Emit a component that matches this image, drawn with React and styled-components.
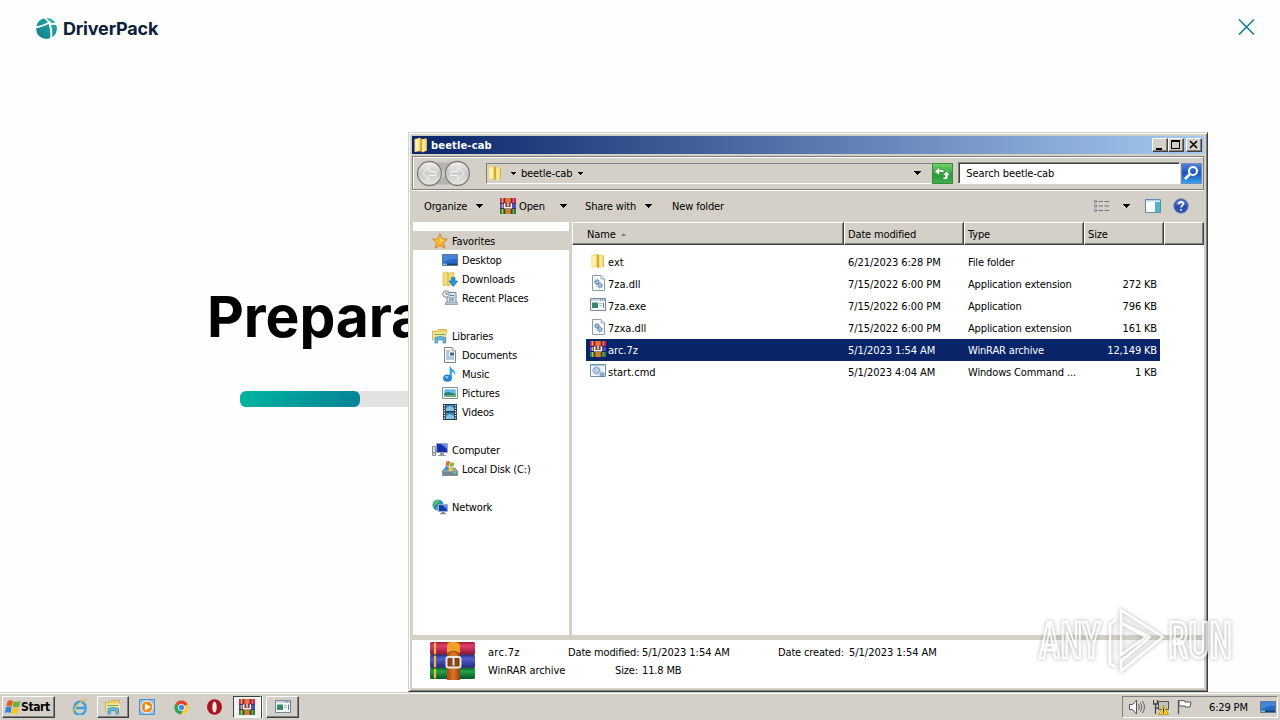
import React from 'react'
import styled, { createGlobalStyle } from 'styled-components'

const GlobalStyle = createGlobalStyle`
  * {
    box-sizing: border-box;
  }
  body {
    margin: 0;
    overflow: hidden;
    background: #fff;
  }
`

const Desktop = styled.div`
  position: relative;
  width: 1280px;
  height: 720px;
  display: flex;
  flex-direction: column;
  overflow: hidden;
  background: #fefefe;
  color: #000;
  font-family: "DejaVu Sans Condensed", "DejaVu Sans", Tahoma, sans-serif;
  font-stretch: condensed;
  font-size: 11px;
  line-height: 14px;
  white-space: nowrap;
`

/* ---------- DriverPack ---------- */

const Installer = styled.main`
  flex: 1;
  font-family: Inter, sans-serif;
  font-stretch: normal;
`

const InstallerHeader = styled.header`
  display: flex;
  justify-content: space-between;
  align-items: flex-start;
  padding: 17px 25px 0 35px;
  height: 283px;
`

const Brand = styled.div`
  display: flex;
  align-items: center;
  gap: 5px;
  height: 23px;
  color: #0b2138;
  font-size: 18px;
  font-weight: 700;
  letter-spacing: -0.18px;
`

const CloseIcon = styled.svg`
  width: 17px;
  height: 17px;
  margin-top: 1px;
`

const Heading = styled.h1`
  margin: 0;
  padding-left: 207px;
  height: 108px;
  font-size: 57px;
  line-height: 68px;
  font-weight: 700;
  letter-spacing: -0.1px;
`

const Progress = styled.div`
  width: 800px;
  height: 16px;
  margin-left: 240px;
  border-radius: 6px;
  background: #e2e2e2;
`

const ProgressBar = styled.div`
  height: 100%;
  border-radius: 6px;
  background: linear-gradient(120deg, #02b3a1 5%, #068496 95%);
`

/* ---------- Explorer ---------- */

const Window = styled.section`
  position: absolute;
  left: 408px;
  top: 132px;
  width: 800px;
  height: 560px;
  display: flex;
  flex-direction: column;
  padding: 2px 1px 3px 2px;
  background: #d4d0c8;
  border: 1px solid;
  border-color: #d4d0c8 #404040 #404040 #d4d0c8;
  box-shadow: inset 1px 1px #fff, inset -1px -1px #808080;
`

const TitleBar = styled.div`
  display: flex;
  align-items: center;
  flex: none;
  width: 792px;
  height: 18px;
  margin: 1px 0 2px 1px;
  padding: 0 2px 0 1px;
  background: linear-gradient(90deg, #0a246a, #a6caf0);
  color: #fff;
  font-weight: 700;
`

const Title = styled.span`
  flex: 1;
  margin-left: 2px;
  padding-top: 1px;
  letter-spacing: 0.17px;
`

const CaptionButton = styled.div`
  width: 16px;
  height: 14px;
  margin-left: ${({ $gap }) => $gap || 0}px;
  background: #d4d0c8;
  border: 1px solid;
  border-color: #fff #404040 #404040 #fff;
  box-shadow: inset -1px -1px #808080;
  svg {
    display: block;
  }
`

const NavBar = styled.div`
  display: flex;
  align-items: center;
  flex: none;
  width: 792px;
  height: 34px;
  margin-left: 1px;
  padding: 0 1px 0 4px;
  border: 1px solid #808080;
  box-shadow: inset 1px 1px #fff, 0 1px #fff;
`

const AddressBar = styled.div`
  display: flex;
  align-items: center;
  width: 447px;
  height: 21px;
  margin-left: 15px;
  padding-right: 10px;
  border: 1px solid;
  border-color: #808080 #d4d0c8 #fff #808080;
`

const Push = styled.span`
  flex: 1;
`

const SquareButton = styled.div`
  width: 21px;
  height: 21px;
  border: 1px solid #808080;
  border-color: ${({ $edge }) => $edge};
  background: ${({ $bg }) => $bg};
  svg {
    display: block;
  }
`

const SearchBox = styled.div`
  display: flex;
  align-items: center;
  width: 222px;
  height: 22px;
  margin: 0 1px 0 5px;
  padding-left: 7px;
  background: #fff;
  border: 1px solid;
  border-color: #808080 #fff #fff #808080;
  box-shadow: inset 1px 1px #404040;
`

const CommandBar = styled.div`
  display: flex;
  align-items: center;
  flex: none;
  height: 32px;
  padding: 0 17px 0 13px;
`

const Label = styled.span`
  flex: none;
  width: ${({ $w }) => ($w ? `${$w}px` : 'auto')};
  margin-left: ${({ $ml }) => $ml || 0}px;
  padding-top: 2px;
  letter-spacing: ${({ $ls }) => $ls ?? -0.15}px;
  text-align: ${({ $right }) => ($right ? 'right' : 'left')};
`

const Spacer = styled.span`
  flex: none;
  width: ${({ $w }) => $w}px;
`

const ArrowSvg = styled.svg`
  flex: none;
  width: ${({ $small }) => ($small ? 5 : 7)}px;
  height: ${({ $small }) => ($small ? 3 : 4)}px;
  margin-left: ${({ $ml }) => $ml || 0}px;
`

const Body = styled.div`
  display: flex;
  flex: 1;
  width: 792px;
  margin-left: 1px;
  border-bottom: 5px solid #d4d0c8;
  background: #fff;
`

const Sidebar = styled.nav`
  width: 160px;
  padding-top: 9px;
  border-right: 3px solid #d4d0c8;
  border-left: 1px solid #d4d0c8;
`

const SideRow = styled.div`
  display: flex;
  align-items: center;
  gap: 4px;
  height: 19px;
  margin-bottom: ${({ $last }) => ($last ? 19 : 0)}px;
  padding-left: ${({ $child }) => ($child ? 29 : 19)}px;
  background: ${({ $active }) => ($active ? '#d4d0c8' : 'transparent')};
`

const FileList = styled.div`
  flex: 1;
`

const Columns = styled.div`
  display: flex;
  height: 23px;
  margin-bottom: 6px;
`

const ColumnHead = styled.div`
  display: flex;
  align-items: center;
  width: ${({ $w }) => $w}px;
  padding-left: ${({ $pad }) => $pad || 3}px;
  padding-top: 1px;
  background: #d4d0c8;
  border: 1px solid;
  border-color: #fff #404040 #404040 #fff;
  box-shadow: inset -1px -1px #808080;
`

const SortMark = styled.svg`
  width: 5px;
  height: 3px;
  margin-left: 5px;
`

const FileRow = styled.div`
  display: flex;
  align-items: center;
  width: 574px;
  height: 22px;
  margin-left: 14px;
  padding: 0 4px;
  background: ${({ $selected }) => ($selected ? '#0a246a' : 'transparent')};
  color: ${({ $selected }) => ($selected ? '#fff' : '#000')};
`

const FileIcon = styled.span`
  flex: none;
  width: 18px;
  height: 18px;
`

const Details = styled.footer`
  display: flex;
  flex: none;
  width: 792px;
  height: 48px;
  margin-left: 1px;
  padding: 2px 0 0 18px;
  background: #fff;
`

const DetailColumn = styled.div`
  width: ${({ $w }) => $w}px;
  padding-top: ${({ $top }) => $top ?? 1}px;
`

const DetailLine = styled.div`
  display: flex;
  align-items: center;
  gap: 4px;
  height: 18px;
`

/* ---------- Taskbar ---------- */

const Taskbar = styled.footer`
  display: flex;
  align-items: center;
  height: 28px;
  padding: 2px 2px 0;
  background: #d4d0c8;
  box-shadow: inset 0 1px #d4d0c8, inset 0 2px #fff;
`

const StartButton = styled.div`
  display: flex;
  align-items: center;
  width: 53px;
  height: 22px;
  padding: 0 0 0 1px;
  font-size: 12px;
  font-weight: 700;
  letter-spacing: -0.4px;
  border: 1px solid;
  border-color: #fff #404040 #404040 #fff;
  box-shadow: inset -1px -1px #808080;
`

const TaskButton = styled.div`
  display: flex;
  align-items: center;
  justify-content: center;
  width: ${({ $w }) => $w || 32}px;
  height: 22px;
  margin-left: ${({ $ml }) => $ml || 0}px;
  border: 1px solid;
  border-color: ${({ $look }) =>
    $look === 'up' ? '#fff #404040 #404040 #fff' : $look === 'down' ? '#404040 #fff #fff #404040' : 'transparent'};
  background: ${({ $look }) => ($look === 'down' ? '#f3f1ee' : 'transparent')};
  box-shadow: ${({ $look }) => ($look === 'up' ? 'inset -1px -1px #808080' : 'none')};
`

const Edge = styled.div`
  width: 2px;
  height: 22px;
  border-left: 1px solid #404040;
  border-right: 1px solid #fff;
`

const Tray = styled.div`
  display: flex;
  align-items: center;
  width: 156px;
  height: 22px;
  padding-left: 6px;
  gap: 8px;
  border: 1px solid;
  border-color: #808080 #fff #fff #808080;
`

const Watermark = styled.svg`
  position: absolute;
  left: 1030px;
  top: 600px;
  overflow: visible;
  filter: drop-shadow(0 0 2px rgba(0, 0, 0, 0.42));
  opacity: 0.75;
`

const IconSvg = styled.svg`
  display: block;
  flex: none;
`

const Icon = ({ size = 16, box = 16, children }) => (
  <IconSvg width={size} height={size} viewBox={`0 0 ${box} ${box}`}>
    {children}
  </IconSvg>
)

const Arrow = ({ ml, small }) => (
  <ArrowSvg $ml={ml} $small={small} viewBox={small ? '0 0 5 3' : '0 0 7 4'} shapeRendering="crispEdges">
    <path d={small ? 'M0 0h5v1H4v1H3v1H2V2H1V1H0z' : 'M0 0h7v1H6v1H5v1H4v1H3V3H2V2H1V1H0z'} />
  </ArrowSvg>
)

const Folder = () => (
  <Icon>
    <path d="M1.500 2L7 .8v13.400L1.500 15z" fill="#f4dc7c" />
    <path d="M2.500 3l3-.7v11l-3 .6z" fill="#fcf3b6" />
    <path d="M7 .8L9 2v13l-2-.8z" fill="#d3aa3a" />
    <path d="M9 2.200l4.500-.9v12.500L9 15.500z" fill="#f3da74" />
    <path d="M9.700 3l1.800-.4v11.500l-1.800.6z" fill="#fbeea6" />
    <path d="M13 2l1 .8v10.800l-1 .4z" fill="#dcb94e" />
  </Icon>
)

const Books = () => (
  <Icon>
    <path d="M0 0h16v5H0z" fill="#c22a5c" />
    <path d="M0 5.500h16V10H0z" fill="#4b4fc8" />
    <path d="M0 10.500h16V16H0z" fill="#16883d" />
    <path d="M0 5h16v.8H0zM0 10h16v.8H0z" fill="#231337" />
    <path d="M1.800 0h1.400v4.800H1.800zM1.800 6h1.400v4H1.800zM1.800 11h1.400v4.800H1.800z" fill="#f0b343" />
    <path d="M4 0h1v16H4zM11 0h1v16h-1z" fill="#2a1840" opacity=".45" />
    <path d="M12.800 0H14v4.800h-1.200zM12.800 11H14v4.800h-1.200z" fill="#dd724c" />
    <path d="M5.500 0h5v4.500h-5zM5.500 11h5v5h-5z" fill="#e4782a" />
    <path d="M4.700 5.200v4.600h6.600V5.200" fill="#8a3d28" stroke="#f6f2ec" strokeWidth="1.400" />
    <path d="M8 4.500v4" stroke="#fff" strokeWidth="1.200" />
  </Icon>
)

const Star = () => (
  <Icon>
    <path d="M8 .8l2.200 4.900 5.200.5-3.900 3.600 1.100 5.300L8 12.400l-4.600 2.700 1.100-5.300L.6 6.200l5.200-.5z" fill="#fcb72a" stroke="#d5812c" strokeWidth=".9" />
    <path d="M8 3l1.300 3.500 3.400.4L8 9z" fill="#ffe17b" />
  </Icon>
)

const Monitor = () => (
  <Icon>
    <path d="M.5 2.500h15v11H.5z" fill="#2768c5" stroke="#5d7794" />
    <path d="M1 3h14v4Q8 6 1 11z" fill="#4384d6" />
    <path d="M1 11.500h14V13H1z" fill="#183f72" />
    <path d="M1 11.500h4V13H1z" fill="#7ac6e2" />
  </Icon>
)

const Downloads = () => (
  <Icon>
    <path d="M1 1.500L6 1v13l-5 .7zM6 2l6-.5V13l-6 2z" fill="#f3d977" stroke="#d4b14d" strokeWidth=".6" />
    <path d="M9.500 6.500h3.500V10h2.600L11.300 15.500 7 10h2.500z" fill="#2794e3" stroke="#176fb5" strokeWidth=".7" />
  </Icon>
)

const Recent = () => (
  <Icon>
    <path d="M5 2.500h9v11H5z" fill="#dce5eb" stroke="#758797" />
    <path d="M4 12h11l.5 2.500H3z" fill="#b9c8d5" stroke="#7b8d9b" strokeWidth=".7" />
    <path d="M8 5.500h4M7 8h5M7 10h5" stroke="#567a9d" />
    <circle cx="4" cy="4" r="3.300" fill="#eef1f3" stroke="#818d96" />
    <path d="M4 2v2h2" fill="none" stroke="#4f5b66" strokeWidth=".8" />
  </Icon>
)

const Libraries = () => (
  <Icon>
    <path d="M.5 3h5l1-1.500h8V12H.5z" fill="#efce66" stroke="#cda340" strokeWidth=".7" />
    <path d="M1 4.500h14v7.500H1z" fill="#f9e69b" />
    <path d="M2.500 6.500h11" stroke="#5fb06a" strokeWidth="1" />
    <path d="M3 15V9.500Q8 7.500 13.500 9.500V15H11v-3.500H5.500V15z" fill="#66bce4" stroke="#398dbc" strokeWidth=".8" />
  </Icon>
)

const Documents = () => (
  <Icon>
    <path d="M2.500.5H10l3.500 3.500v11.500h-11z" fill="#fff" stroke="#758695" />
    <path d="M10 .5V4h3.500" fill="#d9e4ec" stroke="#758695" strokeWidth=".7" />
    <path d="M4 4h4M4 6h3M4 8h3M4 10h8M4 12h8" stroke="#6b91b7" />
    <path d="M8 5.500h4v3H8z" fill="#2f689f" />
  </Icon>
)

const Music = () => (
  <Icon>
    <path d="M8 0c1 3.500 6.500 4 5.200 9.500-.8-3-2.700-3.700-3.400-3.800V12H7.600V0z" fill="#3da0e6" />
    <ellipse cx="5.500" cy="12.200" rx="4.400" ry="3.600" fill="#2584d3" />
    <ellipse cx="4.800" cy="11.200" rx="1.700" ry="1.100" fill="#8bd2f8" />
  </Icon>
)

const Pictures = () => (
  <Icon>
    <path d="M.5 2.500h15v11H.5z" fill="#fff" stroke="#7b909c" />
    <path d="M2.300 4.300h11.400v7.400H2.300z" fill="#69b9e8" />
    <path d="M2.300 8l4-1 7.400 2v2.700H2.300z" fill="#247b7c" />
    <path d="M2.300 10.300l11.400-.5v1.900H2.300z" fill="#72b96e" />
  </Icon>
)

const Videos = () => (
  <Icon>
    <path d="M1 0h14v16H1z" fill="#263744" />
    <path d="M4 1h8v6H4zM4 8.500h8V15H4z" fill="#3687be" />
    <path d="M4 4l4-2 4 2v3H4zM4 12l4-2 4 2v3H4z" fill="#82c4e1" />
    <path d="M2.500 1v15M13.500 1v15" stroke="#fff" strokeWidth="1.400" strokeDasharray="1.3 1.2" />
  </Icon>
)

const Computer = () => (
  <Icon>
    <path d="M.5 4.500h3v9h-3z" fill="#dce0e5" stroke="#838b98" />
    <path d="M1.300 10h1.500v1.500H1.300z" fill="#4eb35b" />
    <path d="M4.500 1.500h11v9h-11z" fill="#172fae" stroke="#9da7bd" />
    <path d="M9 2h6v5z" fill="#5e91eb" />
    <path d="M8 11h4v2h2v1H6v-1h2z" fill="#9699a4" />
  </Icon>
)

const Disk = () => (
  <Icon>
    <path d="M1 9l2-2h10l2.500 3v4.500H.5V10z" fill="#9caab4" stroke="#65747e" strokeWidth=".7" />
    <path d="M1 10.500h14V14H1z" fill="#6f8794" />
    <path d="M11 12h3" stroke="#68e16f" strokeWidth="1.300" />
    <path d="M4.500.5Q6.500-.5 8 .6L7 5Q5 4 3.500 4.800z" fill="#e9632b" />
    <path d="M8.500 1q2 1.200 4 .4L11.500 5.300q-2 1-4-.1z" fill="#7fbc3a" />
    <path d="M3.400 5.300Q5 4.600 6.800 5.600L6 9.600Q4 8.500 2.400 9.300z" fill="#3c94dc" />
    <path d="M7.400 5.800q2 1 3.900.2l-1 4q-2 1-3.800-.2z" fill="#f8c934" />
  </Icon>
)

const Network = () => (
  <Icon>
    <circle cx="6" cy="6" r="5.500" fill="#2d87cb" />
    <path d="M2 2.500L5 .8l3 .6-2 3-3 1.500-1.500 3L.7 6zM4 8l3-1v3l-2 1.300z" fill="#53bf67" />
    <path d="M6.500 5.500h9v7h-9z" fill="#163aad" stroke="#9baecb" />
    <path d="M10 6h5v4z" fill="#5a93ed" />
    <path d="M9.500 13h3v1.300h1.600v1H8v-1h1.500z" fill="#758497" />
  </Icon>
)

const GearShape = ({ x, y, r }) => (
  <g transform={`translate(${x} ${y})`} fill="none" stroke="#527cac">
    <circle r={r} strokeWidth=".9" />
    <circle r={r + 0.8} strokeWidth=".8" strokeDasharray="1 1" />
    <circle r={r / 3} strokeWidth=".6" />
  </g>
)

const Dll = () => (
  <Icon>
    <path d="M2.500.5H11l3.500 3.500v11.500h-12z" fill="#f9fbfd" stroke="#8a9ba9" />
    <path d="M11 .5V4h3.500" fill="#d9e4ee" stroke="#8a9ba9" strokeWidth=".7" />
    <GearShape x={7} y={7} r={1.800} />
    <GearShape x={10} y={10.500} r={1.800} />
  </Icon>
)

const Exe = () => (
  <Icon>
    <path d="M.5 1.500h15v12H.5z" fill="#f8f9fa" stroke="#768895" />
    <path d="M1 2h14v2H1z" fill="#c8d7e3" />
    <path d="M10 3h1M12 3h1M14 3h.7" stroke="#436789" />
    <path d="M2 5.500h6V11H2z" fill="#37866d" />
    <path d="M9 6.500h3M9 8.500h3" stroke="#afbcc5" />
    <path d="M13.500 5.500V11" stroke="#5b83a6" />
  </Icon>
)

const Cmd = () => (
  <Icon>
    <path d="M.5 1.500h15v12H.5z" fill="#eff6fb" stroke="#6f91ae" />
    <path d="M1 2h14v1H1z" fill="#a9c6da" />
    <GearShape x={6.500} y={7.500} r={2.800} />
    <GearShape x={12} y={11.500} r={1.600} />
  </Icon>
)

const Flag = () => (
  <Icon size={17}>
    <path d="M3.500 1.800Q5.500.5 8.500 1.700L7.400 7Q4.800 5.600 2.200 7z" fill="#e75b27" />
    <path d="M9.200 2q3 1.400 6.400-.3L14.400 7q-3 1.600-6.300.2z" fill="#6cb23c" />
    <path d="M2 7.800Q4.400 6.400 7.200 7.700L6.200 13.200Q3.400 11.700.7 13.100z" fill="#3284d6" />
    <path d="M7.900 8q3 1.500 6.300 0L13 13.300q-3 1.600-6.200 0z" fill="#f7c42c" />
  </Icon>
)

const NavButtons = () => (
  <svg width="54" height="27" viewBox="0 0 54 27">
    <defs>
      <linearGradient id="nav" x2="0" y2="1">
        <stop stopColor="#f4f3f1" />
        <stop offset=".5" stopColor="#c9c8c6" />
        <stop offset="1" stopColor="#eceae7" />
      </linearGradient>
    </defs>
    <path d="M13 2.500h28q-14 4-14 11t14 11H13q14-4 14-11t-14-11z" fill="#b5b3af" />
    <circle cx="12.500" cy="13.500" r="12" fill="url(#nav)" stroke="#7e7d7b" strokeWidth="1.300" />
    <circle cx="40.500" cy="13.500" r="12" fill="url(#nav)" stroke="#7e7d7b" strokeWidth="1.300" />
    <path d="M5.500 13.500l6.500-6v4h7v4h-7v4zM47.500 13.500l-6.500-6v4h-7v4h7v4z" fill="#d0cfcd" stroke="#f4f4f3" />
  </svg>
)

const BigBooks = () => (
  <IconSvg width="46" height="40" viewBox="0 0 46 40">
    <defs>
      <linearGradient id="red" x2="0" y2="1"><stop stopColor="#a3163f" /><stop offset=".3" stopColor="#e0406c" /><stop offset="1" stopColor="#8c1236" /></linearGradient>
      <linearGradient id="blue" x2="0" y2="1"><stop stopColor="#2b3596" /><stop offset=".3" stopColor="#5360cc" /><stop offset="1" stopColor="#222a82" /></linearGradient>
      <linearGradient id="green" x2="0" y2="1"><stop stopColor="#0a7034" /><stop offset=".3" stopColor="#23a344" /><stop offset="1" stopColor="#09552c" /></linearGradient>
      <linearGradient id="belt"><stop stopColor="#a64a14" /><stop offset=".5" stopColor="#dc7426" /><stop offset="1" stopColor="#973d12" /></linearGradient>
    </defs>
    <rect width="45" height="12.500" rx="1.500" fill="url(#red)" />
    <rect y="13" width="45" height="12.500" rx="1.500" fill="url(#blue)" />
    <rect y="26" width="45" height="11" rx="1.500" fill="url(#green)" />
    <path d="M5 .500v12M5 13.500v12M5 26.500v10" stroke="#f5b838" strokeWidth="2.200" />
    <path d="M0 12.700h45M0 25.700h45" stroke="#211c37" strokeWidth="1.200" opacity=".7" />
    <path d="M17 0h13v38H17z" fill="url(#belt)" />
    <path d="M17 4q0-4 6.500-4T30 4v7H17z" fill="#f3a029" />
    <path d="M18 11.500q5.500-4 11 0" fill="none" stroke="#9b5015" strokeWidth="1.600" />
    <path d="M20 12h2.500v14H20zM25 12h2.500v14H25z" fill="#d97824" />
    <rect x="16.500" y="15" width="14" height="10.500" rx="2" fill="#6d3318" fillOpacity=".7" stroke="#ece8df" strokeWidth="2" />
    <path d="M23.500 15v8.500" stroke="#fff" strokeWidth="1.800" />
  </IconSvg>
)

const places = [
  { name: 'Favorites', icon: Star, active: true },
  { name: 'Desktop', icon: Monitor, child: true },
  { name: 'Downloads', icon: Downloads, child: true },
  { name: 'Recent Places', icon: Recent, child: true, last: true },
  { name: 'Libraries', icon: Libraries },
  { name: 'Documents', icon: Documents, child: true },
  { name: 'Music', icon: Music, child: true },
  { name: 'Pictures', icon: Pictures, child: true },
  { name: 'Videos', icon: Videos, child: true, last: true },
  { name: 'Computer', icon: Computer },
  { name: 'Local Disk (C:)', icon: Disk, child: true, last: true },
  { name: 'Network', icon: Network },
]

const files = [
  { name: 'ext', icon: Folder, date: '6/21/2023 6:28 PM', type: 'File folder', size: '' },
  { name: '7za.dll', icon: Dll, date: '7/15/2022 6:00 PM', type: 'Application extension', size: '272 KB' },
  { name: '7za.exe', icon: Exe, date: '7/15/2022 6:00 PM', type: 'Application', size: '796 KB' },
  { name: '7zxa.dll', icon: Dll, date: '7/15/2022 6:00 PM', type: 'Application extension', size: '161 KB' },
  { name: 'arc.7z', icon: Books, date: '5/1/2023 1:54 AM', type: 'WinRAR archive', size: '12,149 KB', selected: true },
  { name: 'start.cmd', icon: Cmd, date: '5/1/2023 4:04 AM', type: 'Windows Command ...', size: '1 KB' },
]

const DriverPack = () => (
  <Installer>
    <InstallerHeader>
      <Brand>
        <Icon size={23} box={23}>
          <defs>
            <linearGradient id="globe" x1="1" y1="0" x2="0" y2="1">
              <stop stopColor="#20b6a3" />
              <stop offset="1" stopColor="#13788b" />
            </linearGradient>
          </defs>
          <circle cx="11.500" cy="11.500" r="10.500" fill="url(#globe)" />
          <path d="M0 10.500Q9 9 16 4.500M9 0Q18 6 16 23M14.500 7.500q4.500-1.500 9 0" fill="none" stroke="#fff" strokeWidth="2" />
        </Icon>
        DriverPack
      </Brand>
      <CloseIcon viewBox="0 0 17 17">
        <path d="M1 1.500l15 15M16 1.500l-15 15" stroke="#168092" strokeWidth="1.600" />
      </CloseIcon>
    </InstallerHeader>
    <Heading>Prepara</Heading>
    <Progress>
      <ProgressBar style={{ width: '15%' }} />
    </Progress>
  </Installer>
)

const Explorer = () => (
  <Window>
    <TitleBar>
      <Folder />
      <Title>beetle-cab</Title>
      <CaptionButton>
        <svg width="14" height="12"><path d="M3 9h6v2H3z" /></svg>
      </CaptionButton>
      <CaptionButton>
        <svg width="14" height="12"><path d="M2 1h9v9H2zM3 3v6h7V3z" fillRule="evenodd" /></svg>
      </CaptionButton>
      <CaptionButton $gap={2}>
        <svg width="14" height="12"><path d="M3 2l7 7M10 2L3 9" stroke="#000" strokeWidth="1.700" /></svg>
      </CaptionButton>
    </TitleBar>
    <NavBar>
      <NavButtons />
      <AddressBar>
        <Folder />
        <Arrow ml={8} small />
        <Label $ml={5} $ls={-0.1}>beetle-cab</Label>
        <Arrow ml={6} small />
        <Push />
        <Arrow />
      </AddressBar>
      <SquareButton $edge="#3a8a45" $bg="linear-gradient(#74cf6c, #2a9c3a 60%, #3fb04a)">
        <svg width="19" height="19">
          <path d="M1.500 7.500L6.500 3v2.500h2.500q2 0 2 2v1H8.500V8H6.500v3.500zM17.500 11.500L13.500 7 9.500 11.500H12v1.500h-2v2.500h3q2 0 2-2v-2z" fill="#f4fff0" stroke="#26782f" strokeWidth=".6" />
        </svg>
      </SquareButton>
      <SearchBox>
        <Label $ls={-0.1}>Search beetle-cab</Label>
      </SearchBox>
      <SquareButton $edge="#6d8fc4" $bg="linear-gradient(#5580d4, #1d53bd 50%, #35a5e8)">
        <svg width="19" height="19" fill="none" stroke="#fff" strokeWidth="2">
          <circle cx="11" cy="7" r="4" />
          <path d="M8 10l-5 5" strokeWidth="2.600" />
        </svg>
      </SquareButton>
    </NavBar>
    <CommandBar>
      <Label $w={52}>Organize</Label>
      <Arrow />
      <Spacer $w={17} />
      <Books />
      <Label $w={38} $ml={3}>Open</Label>
      <Arrow ml={3} />
      <Label $w={60} $ml={18}>Share with</Label>
      <Arrow />
      <Label $ml={20}>New folder</Label>
      <Push />
      <Icon>
        <path d="M.5 2.500h2v2h-2zM.5 7h2v2h-2zM.5 11.500h2v2h-2z" fill="none" stroke="#7c8a98" />
        <path d="M4.500 3.500H9M10.500 3.500H15M4.500 8H9M10.500 8H15M4.500 12.500H9M10.500 12.500H15" stroke="#69747f" />
      </Icon>
      <Arrow ml={13} />
      <Spacer $w={15} />
      <Icon>
        <path d="M.5 1.500h15v13H.5z" fill="#fff" stroke="#6289a9" />
        <path d="M1 2h14v1.500H1z" fill="#b4d6ea" />
        <path d="M10 4h5v10h-5z" fill="#4eb7cb" />
      </Icon>
      <Spacer $w={12} />
      <Icon>
        <circle cx="8" cy="8" r="7.300" fill="#2a4fae" stroke="#8394b9" />
        <path d="M2.500 6.500a5.700 5.700 0 0111 0z" fill="#5f86d3" />
        <path d="M5.800 6.200q0-2.300 2.300-2.300t2.200 2q0 1-1.100 1.700T8 9.500M8 11v1.800" fill="none" stroke="#fff" strokeWidth="1.600" />
      </Icon>
    </CommandBar>
    <Body>
      <Sidebar>
        {places.map(({ name, icon: PlaceIcon, active, child, last }) => (
          <SideRow key={name} $active={active} $child={child} $last={last}>
            <PlaceIcon />
            <Label $ls={-0.17}>{name}</Label>
          </SideRow>
        ))}
      </Sidebar>
      <FileList>
        <Columns>
          <ColumnHead $w={272} $pad={14}>
            <Label>Name</Label>
            <SortMark><path d="M0 3l2.500-3L5 3z" fill="#808080" /></SortMark>
          </ColumnHead>
          <ColumnHead $w={120}><Label>Date modified</Label></ColumnHead>
          <ColumnHead $w={120}><Label>Type</Label></ColumnHead>
          <ColumnHead $w={80}><Label>Size</Label></ColumnHead>
          <ColumnHead $w={40} />
        </Columns>
        {files.map(({ name, icon: TypeIcon, date, type, size, selected }) => (
          <FileRow key={name} $selected={selected}>
            <FileIcon><TypeIcon /></FileIcon>
            <Label $w={240} $ls={0}>{name}</Label>
            <Label $w={120} $ls={-0.06}>{date}</Label>
            <Label $w={120}>{type}</Label>
            <Label $w={69} $right>{size}</Label>
          </FileRow>
        ))}
      </FileList>
    </Body>
    <Details>
      <DetailColumn $w={58} $top={0}><BigBooks /></DetailColumn>
      <DetailColumn $w={80}>
        <DetailLine><Label $ls={0.3}>arc.7z</Label></DetailLine>
        <DetailLine><Label $ls={-0.05}>WinRAR archive</Label></DetailLine>
      </DetailColumn>
      <DetailColumn $w={210}>
        <DetailLine><Label $w={70} $right>Date modified:</Label><Label $ls={-0.03}>5/1/2023 1:54 AM</Label></DetailLine>
        <DetailLine><Label $w={70} $right>Size:</Label><Label>11.8 MB</Label></DetailLine>
      </DetailColumn>
      <DetailColumn $w={200}>
        <DetailLine><Label $w={67}>Date created:</Label><Label $ls={-0.03}>5/1/2023 1:54 AM</Label></DetailLine>
      </DetailColumn>
    </Details>
  </Window>
)

const TaskBar = () => (
  <Taskbar>
    <StartButton><Flag />Start</StartButton>
    <TaskButton $ml={9}>
      <Icon>
        <path d="M13.500 10.500A5.800 5.800 0 112.500 7.500a5.500 5.500 0 0111 1.500H4" fill="none" stroke="#3aa0df" strokeWidth="2.500" />
        <path d="M1.500 14.500C-.5 11 11-1.500 15 1.500" fill="none" stroke="#e8bd43" strokeWidth="1.300" />
      </Icon>
    </TaskButton>
    <TaskButton $ml={1} $look="up"><Libraries /></TaskButton>
    <TaskButton $ml={2}>
      <Icon>
        <path d="M.5.500h15v15H.5z" fill="#8fc3ee" stroke="#4f8fc9" />
        <circle cx="8" cy="8" r="6" fill="#f18a1c" stroke="#fff" />
        <path d="M6 4.500l6 3.500-6 3.500z" fill="#fff" />
      </Icon>
    </TaskButton>
    <TaskButton $ml={2}>
      <Icon size={15}>
        <circle cx="8" cy="8" r="7.500" fill="#f8cc3c" />
        <path d="M8 8L1.500 4.200A7.500 7.500 0 0114.600 4.500z" fill="#df4437" />
        <path d="M1.400 4.300A7.500 7.500 0 007.200 15.500L11 9 8 8z" fill="#2ba35a" />
        <circle cx="8" cy="8" r="3.400" fill="#4285e8" stroke="#fff" />
      </Icon>
    </TaskButton>
    <TaskButton $ml={2}>
      <Icon>
        <ellipse cx="7.500" cy="8" rx="7.500" ry="7.700" fill="#a8141d" />
        <ellipse cx="7.500" cy="8" rx="2.200" ry="5.600" fill="#f1e7e4" />
      </Icon>
    </TaskButton>
    <TaskButton $w={28} $ml={2} $look="down"><Books /></TaskButton>
    <Edge />
    <TaskButton $w={33} $ml={3} $look="up"><Exe /></TaskButton>
    <Push />
    <Tray>
      <Icon>
        <path d="M.5 5.500h3L7.500 1v14l-4-4.500h-3z" fill="#fff" stroke="#555" />
        <path d="M9.500 5q2 3 0 6M11.500 3.500q3 4.500 0 9M13.500 2q4 6 0 12" fill="none" stroke="#666" />
      </Icon>
      <Icon>
        <path d="M5.500 2.500h10v8h-10z" fill="#c4c2bc" stroke="#555" />
        <path d="M.5 1v4h4V1M2.500 5v10M3 9h3" fill="none" stroke="#444" strokeWidth="1.300" />
        <path d="M10.500 6.500l5 9h-10z" fill="#f7d21f" stroke="#a88617" strokeWidth=".7" />
        <path d="M10.500 9.500v3M10.500 13.300v1" stroke="#000" />
      </Icon>
      <Icon>
        <path d="M1.500 1v14" stroke="#555" strokeWidth="1.300" />
        <path d="M2 2q3-1 6 0v1h6l-1 5H8V7H2z" fill="#fff" stroke="#555" />
      </Icon>
      <Label $w={43} $ml={8}>6:29 PM</Label>
      <Monitor />
    </Tray>
  </Taskbar>
)

const App = () => (
  <>
    <GlobalStyle />
    <Desktop>
      <DriverPack />
      <Explorer />
      <TaskBar />
      <Watermark width="220" height="80" fill="none" stroke="#fff" strokeWidth="2.600" strokeLinejoin="round">
        <g fontFamily="Roboto, sans-serif" fontSize="50" fontWeight="500" fill="#fff" fillOpacity=".35">
          <text x="9" y="58" textLength="62" lengthAdjust="spacingAndGlyphs">ANY</text>
          <text x="138" y="58" textLength="64" lengthAdjust="spacingAndGlyphs">RUN</text>
        </g>
        <path d="M86 20l-6 4v40l6 3M91 10l42 27-42 34V61l29-24-29-14zM91 23v32l25-18z" fill="#fff" fillOpacity=".2" fillRule="evenodd" />
      </Watermark>
    </Desktop>
  </>
)

export default App
